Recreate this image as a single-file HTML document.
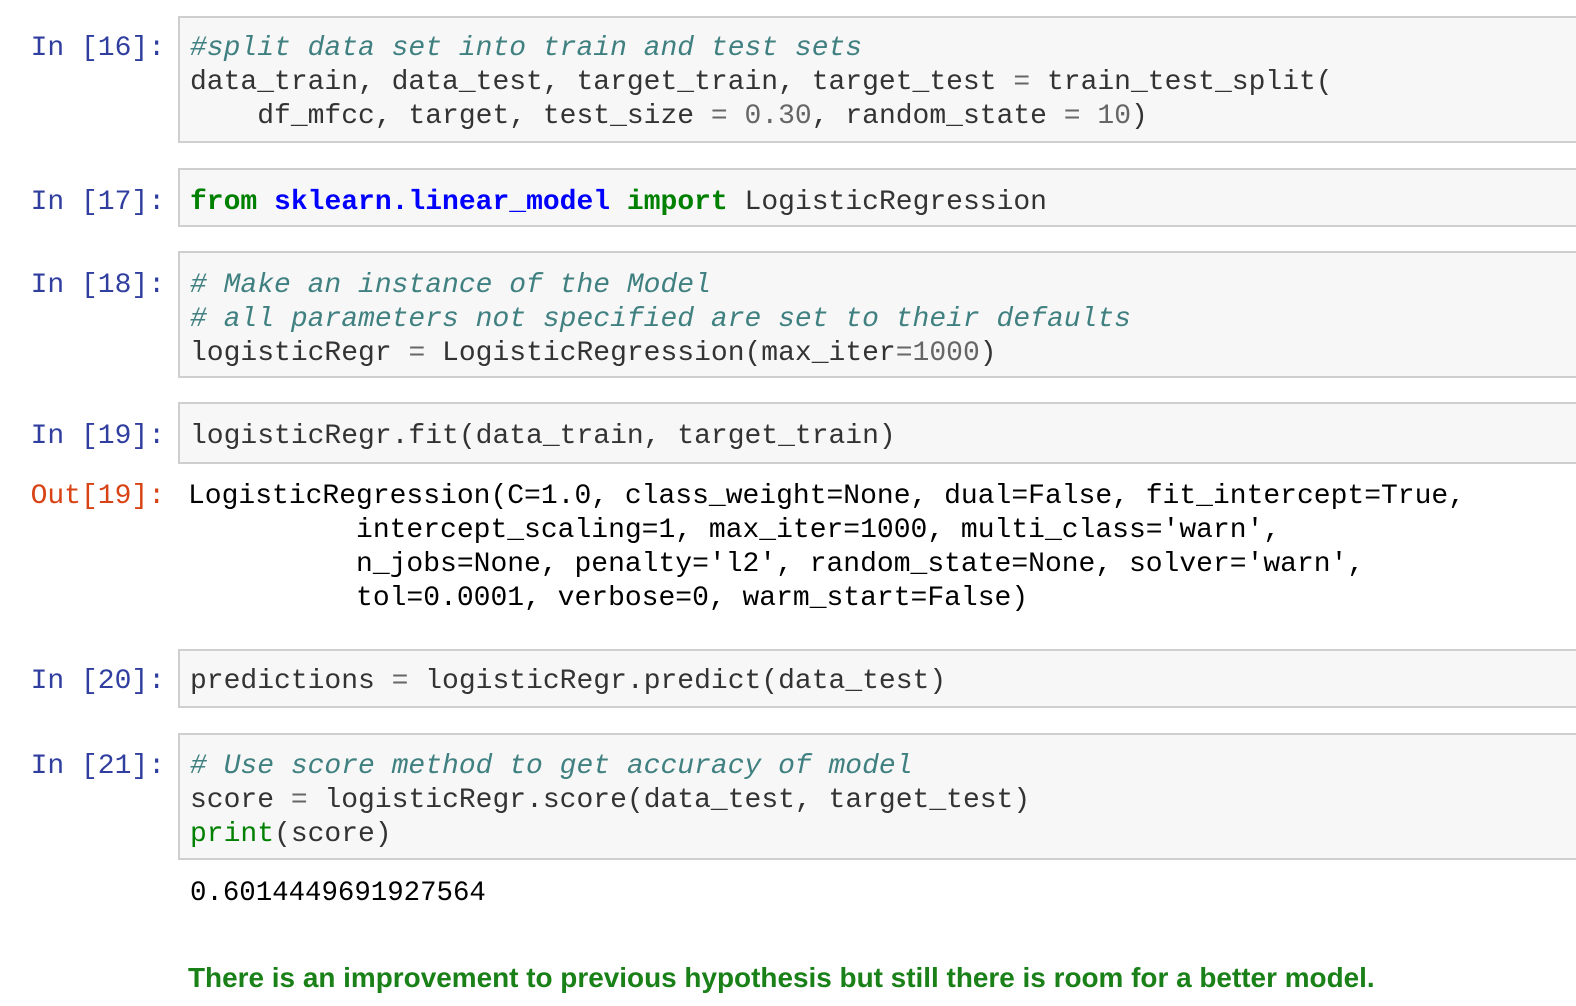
<!DOCTYPE html>
<html><head><meta charset="utf-8"><style>
html,body{margin:0;padding:0;background:#fff;width:1576px;height:1006px;overflow:hidden;position:relative}
.p{position:absolute;right:1411px;font-family:"Liberation Mono",monospace;font-size:28px;line-height:34px;white-space:pre;color:#303F9F}
.o{color:#D84315}
.box{position:absolute;left:178px;width:1420px;background:#f7f7f7;border:2px solid #cfcfcf;border-right:none;box-sizing:border-box}
.code{position:absolute;left:190px;font-family:"Liberation Mono",monospace;font-size:28px;line-height:34px;white-space:pre;color:#333}
.out{color:#000;left:188px}
.c{color:#408080;font-style:italic}
.k{color:#008000;font-weight:bold}
.n{color:#0000FF;font-weight:bold}
.m{color:#666}
.b{color:#008000}
.md{position:absolute;left:188px;top:962px;font-family:"Liberation Sans",Arial,sans-serif;font-weight:bold;font-size:28px;color:#1a8018;white-space:nowrap;transform:scaleX(0.997);transform-origin:left top}
</style></head><body>

<div class="p" style="top:32px">In [16]:</div>
<div class="box" style="top:16px;height:127px"></div>
<div class="code" style="top:32px"><span class="c">#split data set into train and test sets</span>
data_train, data_test, target_train, target_test <span class="m">=</span> train_test_split(
    df_mfcc, target, test_size <span class="m">=</span> <span class="m">0.30</span>, random_state <span class="m">=</span> <span class="m">10</span>)</div>

<div class="p" style="top:186px">In [17]:</div>
<div class="box" style="top:168px;height:59px"></div>
<div class="code" style="top:186px"><span class="k">from</span> <span class="n">sklearn.linear_model</span> <span class="k">import</span> LogisticRegression</div>

<div class="p" style="top:269px">In [18]:</div>
<div class="box" style="top:251px;height:127px"></div>
<div class="code" style="top:269px"><span class="c"># Make an instance of the Model</span>
<span class="c"># all parameters not specified are set to their defaults</span>
logisticRegr <span class="m">=</span> LogisticRegression(max_iter<span class="m">=1000</span>)</div>

<div class="p" style="top:420px">In [19]:</div>
<div class="box" style="top:402px;height:62px"></div>
<div class="code" style="top:420px">logisticRegr.fit(data_train, target_train)</div>

<div class="p o" style="top:480px">Out[19]:</div>
<div class="code out" style="top:480px">LogisticRegression(C=1.0, class_weight=None, dual=False, fit_intercept=True,
          intercept_scaling=1, max_iter=1000, multi_class='warn',
          n_jobs=None, penalty='l2', random_state=None, solver='warn',
          tol=0.0001, verbose=0, warm_start=False)</div>

<div class="p" style="top:665px">In [20]:</div>
<div class="box" style="top:649px;height:59px"></div>
<div class="code" style="top:665px">predictions <span class="m">=</span> logisticRegr.predict(data_test)</div>

<div class="p" style="top:750px">In [21]:</div>
<div class="box" style="top:733px;height:127px"></div>
<div class="code" style="top:750px"><span class="c"># Use score method to get accuracy of model</span>
score <span class="m">=</span> logisticRegr.score(data_test, target_test)
<span class="b">print</span>(score)</div>

<div class="code out" style="top:877px;left:190px;font-size:27.4px">0.6014449691927564</div>

<div class="md">There is an improvement to previous hypothesis but still there is room for a better model.</div>
</body></html>
